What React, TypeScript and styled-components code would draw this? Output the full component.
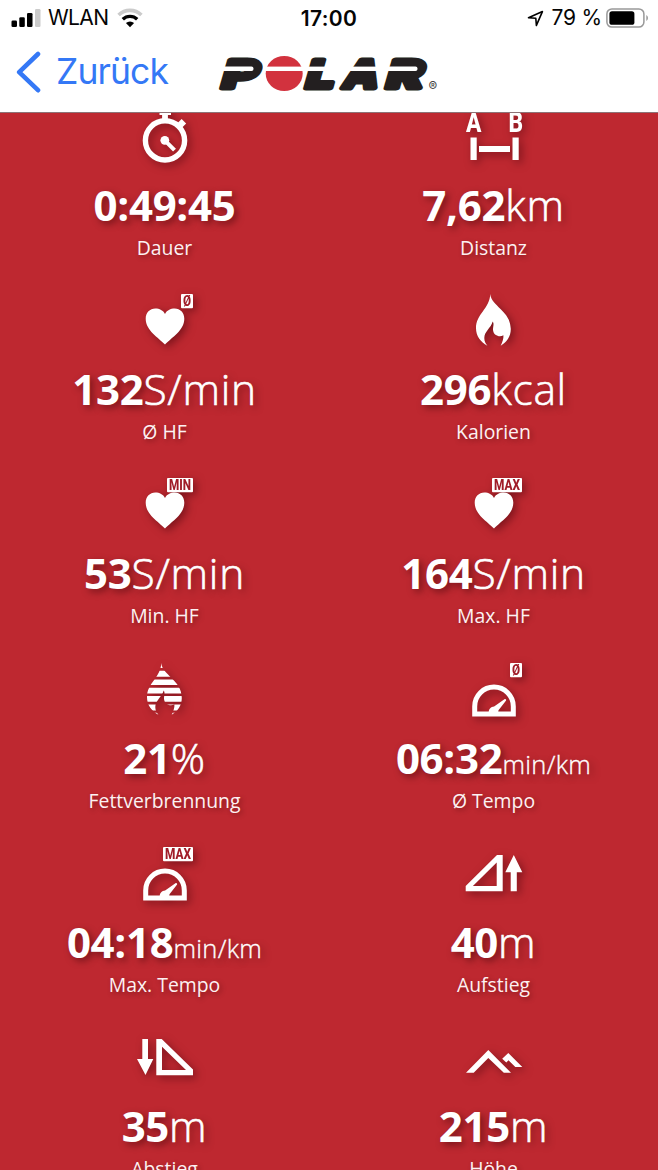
import React from "react";
import styled, { createGlobalStyle } from "styled-components";

const GlobalStyle = createGlobalStyle`
  html, body { margin: 0; padding: 0; background: #fff; }
  * { box-sizing: border-box; }
`;

const Screen = styled.div`
  width: 658px;
  height: 1170px;
  display: flex;
  flex-direction: column;
  overflow: hidden;
  background: #fff;
  font-family: Inter, "Liberation Sans", sans-serif;
`;

const StatusBar = styled.div`
  height: 36px;
  flex: none;
  display: grid;
  grid-template-columns: 1fr auto 1fr;
  align-items: center;
  padding: 0 9px 0 11px;
  font-size: 21px;
  line-height: 38px;
  color: #050505;
`;

const StatusGroup = styled.div<{ $end?: boolean }>`
  display: flex;
  align-items: center;
  height: 36px;
  justify-content: ${(p) => (p.$end ? "flex-end" : "flex-start")};
`;

const Carrier = styled.span`
  margin: 0 9px 0 7px;
  letter-spacing: -0.6px;
`;

const Clock = styled.span`
  height: 36px;
  margin-right: 2px;
  font-weight: 600;
  letter-spacing: 0.4px;
`;

const Battery = styled.span`
  margin: 0 4px 0 8px;
  letter-spacing: -0.2px;
`;

const NavBar = styled.header`
  height: 77px;
  flex: none;
  display: flex;
  align-items: flex-start;
  padding: 14px 0 0 16px;
  border-bottom: 1px solid #8d7376;
`;

const BackButton = styled.button`
  display: flex;
  align-items: center;
  gap: 15px;
  width: 203px;
  height: 44px;
  padding: 0;
  border: 0;
  background: none;
  color: #3478f6;
  font: 400 35.5px/44px Inter, "Liberation Sans", sans-serif;
  letter-spacing: -0.9px;
`;

const LogoMark = styled.svg`
  display: block;
  overflow: visible;
`;

const Stats = styled.main`
  flex: 1;
  min-height: 0;
  overflow: hidden;
  background: #be2830;
`;

const Grid = styled.div`
  display: grid;
  grid-template-columns: 1fr 1fr;
  grid-auto-rows: 184.2px;
  margin-top: -6px;
`;

const Cell = styled.section`
  display: flex;
  flex-direction: column;
  align-items: center;
  color: #fff;
  font-family: "Open Sans", "Noto Sans", sans-serif;
`;

const IconBox = styled.svg`
  display: block;
  width: 60px;
  height: 60px;
  margin-right: 1px;
  flex: none;
  overflow: visible;
  fill: #fff;
  filter: drop-shadow(3px 3px 4px rgba(60, 0, 8, 0.5));
`;

const Value = styled.div`
  margin-top: 9px;
  height: 58px;
  font-size: 42px;
  line-height: 58px;
  font-weight: 700;
  letter-spacing: -0.3px;
  white-space: nowrap;
  text-shadow: 3px 3px 7px rgba(50, 0, 6, 0.5);
`;

const Unit = styled.span<{ $small?: boolean }>`
  font-weight: 300;
  font-size: ${(p) => (p.$small ? 25.5 : 42.5)}px;
  letter-spacing: ${(p) => (p.$small ? 0.3 : 0.7)}px;
  -webkit-text-stroke: ${(p) => (p.$small ? 0.35 : 0.6)}px #fff;
`;

const Label = styled.div`
  font-size: 19.4px;
  line-height: 28px;
  font-weight: 400;
  white-space: nowrap;
  color: #fdf1f2;
  text-shadow: 2px 2px 5px rgba(50, 0, 6, 0.4);
`;

const FLAME =
  "M26.8 3C27.5 15 47.3 20 47.3 38C47.3 46 43 51 37.2 54.8C39 51 40.2 47.5 39.9 44.3C36 46.6 30.2 44.5 29.6 39.5C29.2 36 31 33 29.2 30.5C27.5 37 20.8 40.5 20.8 47C20.8 50 22 52.5 23.9 54.8C17 51 12.5 45 12.5 37.3C12.5 23 26 18 26.8 3Z";

const Badge = ({ text, width }: { text: string; width: number }) => (
  <g>
    <rect x={58.5 - width} y="3" width={width} height="14.2" rx="1" />
    <text
      x={58.5 - width + 2}
      y="15.1"
      fontFamily="Roboto, sans-serif"
      fontWeight="800"
      fontSize="14.5"
      fill="#a01c28"
      textLength={width - 4}
      lengthAdjust="spacingAndGlyphs"
    >
      {text}
    </text>
  </g>
);

const Heart = () => (
  <path d="M30.5 53.6C24 46.5 11.2 39.5 11.2 27.7C11.2 21.8 15.4 17.6 20.8 17.6C25 17.6 28.8 19.6 30.5 23C32.2 19.6 36 17.6 40.2 17.6C45.6 17.6 49.8 21.8 49.8 27.7C49.8 39.5 37 46.5 30.5 53.6Z" />
);

const Gauge = () => (
  <g>
    <path d="M11.2 53.9V46.4a19.3 19.3 0 0 1 38.6 0V53.9Z" fill="none" stroke="#fff" strokeWidth="5" />
    <path d="M25.2 52.5C25.2 48.8 27.5 47 30.6 46.6L41.3 39Q43 38.8 42.6 40.6L35 50.2L34.6 52.5Z" />
  </g>
);

const icons: Record<string, React.ReactNode> = {
  duration: (
    <g>
      <circle cx="30.5" cy="33.4" r="19.6" fill="none" stroke="#fff" strokeWidth="5.4" />
      <path d="M25 2H36.5V8H33.4V13H27.6V8H25Z" />
      <path d="M44.4 19.2L49.4 14.2" stroke="#fff" strokeWidth="6.4" />
      <circle cx="30.3" cy="33.3" r="4.4" />
      <path d="M30.3 33.3L40 43.2" stroke="#fff" strokeWidth="4" />
    </g>
  ),
  distance: (
    <g>
      <g fontFamily="Roboto, sans-serif" fontWeight="800" fontSize="28">
        <text x="2.5" y="25.2" textLength="15.4" lengthAdjust="spacingAndGlyphs">A</text>
        <text x="44.9" y="25.2" textLength="14.6" lengthAdjust="spacingAndGlyphs">B</text>
      </g>
      <path d="M7 30.4H13.2V53H7ZM49 30.4H55.2V53H49ZM15.5 39H46.5V45H15.5Z" />
    </g>
  ),
  heartAvg: <g><Heart /><Badge text="Ø" width={12} /></g>,
  heartMin: <g><Heart /><Badge text="MIN" width={26} /></g>,
  heartMax: <g><Heart /><Badge text="MAX" width={30} /></g>,
  calories: <path d={FLAME} />,
  fat: (
    <g>
      <clipPath id="flame-bands">
        <path d="M0 2H60V8.1H0ZM0 10.7H60V16.7H0ZM0 19.4H60V25H0ZM0 27.7H60V33.4H0ZM0 36H60V41.7H0ZM0 44.4H60V50.4H0ZM0 52.7H60V56H0Z" />
      </clipPath>
      <path d={FLAME} clipPath="url(#flame-bands)" />
    </g>
  ),
  paceAvg: <g><Gauge /><Badge text="Ø" width={12} /></g>,
  paceMax: <g><Gauge /><Badge text="MAX" width={30} /></g>,
  ascent: (
    <path
      fillRule="evenodd"
      d="M2.2 47.2V41.9L33.5 10.9H39.2V47.2ZM9.4 41.9H33.2V18.5ZM50.3 10.9L58.8 28.2H53.3V47.2H47.2V28.2H41.8Z"
    />
  ),
  descent: (
    <path
      fillRule="evenodd"
      d="M7.8 11H13.5V31H18.8L11 47L2.5 31H7.8ZM21.8 11H27.2L58.5 41.6V47.3H21.8ZM27.5 18.7V42H51.5Z"
    />
  ),
  altitude: (
    <path d="M2.5 44.7L24.8 22L47.5 44.7H40.3L24.8 29.9L10.2 44.7ZM44.8 25L58.8 39H51.8L45 32.2L42.8 34.6L38.7 30.8Z" />
  ),
};

type Stat = { icon: string; value: string; unit?: string; small?: boolean; label: string };

const stats: Stat[] = [
  { icon: "duration", value: "0:49:45", label: "Dauer" },
  { icon: "distance", value: "7,62", unit: "km", label: "Distanz" },
  { icon: "heartAvg", value: "132", unit: "S/min", label: "Ø HF" },
  { icon: "calories", value: "296", unit: "kcal", label: "Kalorien" },
  { icon: "heartMin", value: "53", unit: "S/min", label: "Min. HF" },
  { icon: "heartMax", value: "164", unit: "S/min", label: "Max. HF" },
  { icon: "fat", value: "21", unit: "%", label: "Fettverbrennung" },
  { icon: "paceAvg", value: "06:32", unit: "min/km", small: true, label: "Ø Tempo" },
  { icon: "paceMax", value: "04:18", unit: "min/km", small: true, label: "Max. Tempo" },
  { icon: "ascent", value: "40", unit: "m", label: "Aufstieg" },
  { icon: "descent", value: "35", unit: "m", label: "Abstieg" },
  { icon: "altitude", value: "215", unit: "m", label: "Höhe" },
];

const Logo = () => (
  <LogoMark width="224" height="46" viewBox="0 0 224 46">
    <g
      fontFamily="Inter, sans-serif"
      fontWeight="800"
      fontSize="38.5"
      fill="#231f20"
      stroke="#231f20"
      strokeWidth="5"
      strokeLinejoin="round"
    >
      <text transform="translate(0.5 37.8) skewX(-16) scale(1.42 1)">P</text>
      <text transform="translate(84.5 37.8) skewX(-16) scale(1.3 1)">L</text>
      <text transform="translate(122 37.8) skewX(-16) scale(1.17 1)">A</text>
      <text transform="translate(165 37.8) skewX(-16) scale(1.42 1)">R</text>
    </g>
    <ellipse cx="65.2" cy="23.5" rx="18.5" ry="17.6" fill="#d2323e" />
    <rect x="-2" y="16.6" width="36.5" height="4.4" rx="2" fill="#fff" />
    <rect x="44" y="16.6" width="119" height="4.4" fill="#fff" />
    <rect x="163" y="16.6" width="35.5" height="4.4" rx="2" fill="#fff" />
    <text x="209.5" y="40.5" fontFamily="Inter, sans-serif" fontSize="13" fill="#444">®</text>
  </LogoMark>
);

export default function App() {
  return (
    <Screen>
      <GlobalStyle />
      <StatusBar>
        <StatusGroup>
          <svg width="30" height="20" viewBox="0 0 30 20">
            <rect x="0.5" y="12.5" width="5.5" height="6.5" rx="1.3" />
            <rect x="8.3" y="9.3" width="5.5" height="9.7" rx="1.3" />
            <rect x="16" y="5" width="5.5" height="14" rx="1.3" />
            <rect x="24" y="1" width="5.5" height="18" rx="1.3" fill="#cbcbcb" />
          </svg>
          <Carrier>WLAN</Carrier>
          <svg width="26" height="20" viewBox="0 0 26 20" fill="none">
            <path d="M1.6 7A16.3 16.3 0 0 1 24.4 7" stroke="#cbcbcb" strokeWidth="3.6" />
            <path d="M5.8 11.3A10.4 10.4 0 0 1 20.2 11.3" stroke="#000" strokeWidth="3.4" />
            <path d="M13 19.2L8.9 15.1A5.9 5.9 0 0 1 17.1 15.1Z" fill="#000" />
          </svg>
        </StatusGroup>
        <Clock>17:00</Clock>
        <StatusGroup $end>
          <svg width="17" height="17" viewBox="0 0 17 17">
            <path d="M1.5 7.8L15.4 1.6L9.4 15.4L8.8 8.3Z" fill="none" stroke="#000" strokeWidth="1.6" strokeLinejoin="round" />
          </svg>
          <Battery>79 %</Battery>
          <svg width="43" height="20" viewBox="0 0 43 20">
            <rect x="0.9" y="0.9" width="37" height="18.2" rx="5" fill="none" stroke="#999" strokeWidth="1.5" />
            <rect x="3.4" y="3.2" width="25" height="13.6" rx="2.6" />
            <path d="M40.3 7Q42 8 42 10T40.3 13Z" fill="#999" />
          </svg>
        </StatusGroup>
      </StatusBar>
      <NavBar>
        <BackButton>
          <svg width="25" height="42" viewBox="0 0 25 42">
            <path d="M22 3L3.2 21.2L22 39.2" fill="none" stroke="#3478f6" strokeWidth="4.6" strokeLinecap="round" strokeLinejoin="round" />
          </svg>
          Zurück
        </BackButton>
        <Logo />
      </NavBar>
      <Stats>
        <Grid>
          {stats.map((s) => (
            <Cell key={s.label}>
              <IconBox viewBox="-0.5 0 60 60">{icons[s.icon]}</IconBox>
              <Value>
                {s.value}
                {s.unit && <Unit $small={s.small}>{s.unit}</Unit>}
              </Value>
              <Label>{s.label}</Label>
            </Cell>
          ))}
        </Grid>
      </Stats>
    </Screen>
  );
}
